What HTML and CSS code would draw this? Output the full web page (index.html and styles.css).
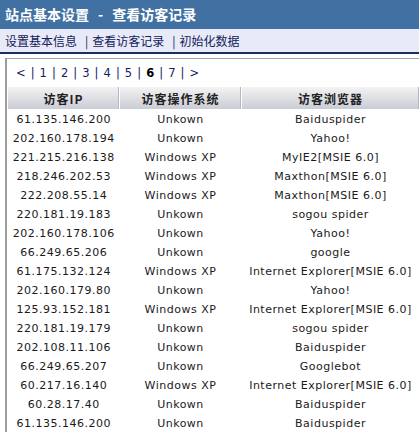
FILE: index.html
```html
<!DOCTYPE html>
<html lang="zh">
<head>
<meta charset="utf-8">
<title>查看访客记录</title>
<link rel="stylesheet" href="styles.css">
</head>
<body>
<div class="titlebar">站点基本设置<span class="dash">-</span>查看访客记录</div>
<div class="nav"><a>设置基本信息</a><span class="sep">|</span><a>查看访客记录</a><span class="sep">|</span><a>初始化数据</a></div>
<div class="panel">
  <div class="pager">&lt; | 1 | 2 | 3 | 4 | 5 | <b>6</b> | 7 | &gt;</div>
  <table class="grid">
    <thead>
      <tr><th class="c1">访客IP</th><th class="c2">访客操作系统</th><th class="c3">访客浏览器</th></tr>
    </thead>
    <tbody>
      <tr><td>61.135.146.200</td><td>Unkown</td><td>Baiduspider</td></tr>
      <tr><td>202.160.178.194</td><td>Unkown</td><td>Yahoo!</td></tr>
      <tr><td>221.215.216.138</td><td>Windows XP</td><td>MyIE2[MSIE 6.0]</td></tr>
      <tr><td>218.246.202.53</td><td>Windows XP</td><td>Maxthon[MSIE 6.0]</td></tr>
      <tr><td>222.208.55.14</td><td>Windows XP</td><td>Maxthon[MSIE 6.0]</td></tr>
      <tr><td>220.181.19.183</td><td>Unkown</td><td>sogou spider</td></tr>
      <tr><td>202.160.178.106</td><td>Unkown</td><td>Yahoo!</td></tr>
      <tr><td>66.249.65.206</td><td>Unkown</td><td>google</td></tr>
      <tr><td>61.175.132.124</td><td>Windows XP</td><td>Internet Explorer[MSIE 6.0]</td></tr>
      <tr><td>202.160.179.80</td><td>Unkown</td><td>Yahoo!</td></tr>
      <tr><td>125.93.152.181</td><td>Windows XP</td><td>Internet Explorer[MSIE 6.0]</td></tr>
      <tr><td>220.181.19.179</td><td>Unkown</td><td>sogou spider</td></tr>
      <tr><td>202.108.11.106</td><td>Unkown</td><td>Baiduspider</td></tr>
      <tr><td>66.249.65.207</td><td>Unkown</td><td>Googlebot</td></tr>
      <tr><td>60.217.16.140</td><td>Windows XP</td><td>Internet Explorer[MSIE 6.0]</td></tr>
      <tr><td>60.28.17.40</td><td>Unkown</td><td>Baiduspider</td></tr>
      <tr><td>61.135.146.200</td><td>Unkown</td><td>Baiduspider</td></tr>
    </tbody>
  </table>
</div>
</body>
</html>
```
FILE: styles.css
```css
html, body {
  margin: 0;
  padding: 0;
  background: #ffffff;
  overflow: hidden;
}
body {
  font-family: "DejaVu Sans", "Noto Sans CJK SC", sans-serif;
  color: #1a1a1a;
}
.titlebar {
  height: 29px;
  line-height: 29px;
  background: #4171a3;
  color: #ffffff;
  font-family: "Noto Sans CJK SC", sans-serif;
  font-weight: bold;
  font-size: 14px;
  padding-left: 5px;
  white-space: nowrap;
}
.titlebar .dash {
  margin: 0 9px 0 9px;
}
.nav {
  height: 23px;
  line-height: 23px;
  background: #e8ebf7;
  border-bottom: 2px solid #1d2d5e;
  font-family: "Noto Sans CJK SC", sans-serif;
  font-size: 12px;
  color: #14215a;
  padding-left: 5px;
  white-space: nowrap;
}
.nav a {
  color: #14215a;
}
.nav .sep {
  margin: 0 4px 0 8px;
}
.panel {
  margin-top: 4px;
  margin-left: 5px;
  border-top: 1px solid #a3a3a3;
  border-left: 2px solid #9c9c9c;
  padding-left: 1px;
}
.pager {
  height: 28px;
  line-height: 28px;
  padding-left: 8px;
  font-size: 11.5px;
  color: #142060;
  word-spacing: 1px;
  letter-spacing: 0.2px;
  white-space: nowrap;
}
.pager b {
  color: #000;
}
.grid {
  border-collapse: collapse;
  width: 412px;
  table-layout: fixed;
}
.grid th {
  height: 22px;
  padding: 0;
  font-family: "Noto Sans CJK SC", sans-serif;
  font-weight: bold;
  font-size: 12px;
  letter-spacing: 1px;
  color: #222;
  background: linear-gradient(#f3f3f3, #c9ccd4);
  border-right: 1px solid #ffffff;
  box-shadow: inset -1px 0 0 #b4b7bf;
  text-align: center;
}
.grid th.c1 { width: 111px; }
.grid th.c2 { width: 121px; }
.grid td {
  height: 19px;
  padding: 0;
  padding-top: 1px;
  box-sizing: border-box;
  font-size: 11px;
  letter-spacing: 0.5px;
  text-align: center;
  white-space: nowrap;
  color: #1a1a1a;
}
```
